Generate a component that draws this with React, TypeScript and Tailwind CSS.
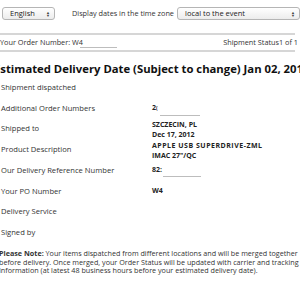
import React from 'react'

// Order status page, scrolled a little to the right so the heading is clipped

const font = { fontFamily: '"Open Sans", "Liberation Sans", sans-serif' }

function FakeSelect({ label, className }: { label: string; className: string }) {
  return (
    <div
      className={`flex h-[13px] shrink-0 items-center justify-between rounded-[3px] border border-[#b5b5b5] bg-gradient-to-b from-white to-[#ececec] pl-[7px] pr-[4px] text-[7.5px] text-[#222] ${className}`}
    >
      <span>{label}</span>
      <span className="flex flex-col text-[4px] leading-[3px] text-[#444]">
        <span>▲</span>
        <span>▼</span>
      </span>
    </div>
  )
}

function Masked({ w, ml, mb }: { w: string; ml: string; mb: string }) {
  return <span className={`h-[1px] self-end bg-[#bdbdbd] ${w} ${ml} ${mb}`} />
}

const rows: { label: string; value?: React.ReactNode }[] = [
  { label: 'Shipment dispatched' },
  {
    label: 'Additional Order Numbers',
    value: (
      <>
        <span>
          2<span className="text-[5px]">(</span>
        </span>
        <Masked w="w-[40px]" ml="ml-[2px]" mb="mb-[3px]" />
      </>
    )
  },
  {
    label: 'Shipped to',
    value: (
      <span className="mt-[2px] flex flex-col leading-[10px]">
        <span>SZCZECIN, PL</span>
        <span>Dec 17, 2012</span>
      </span>
    )
  },
  {
    label: 'Product Description',
    value: (
      <span className="mt-[2px] flex flex-col leading-[10px]">
        <span className="tracking-[0.5px]">APPLE USB SUPERDRIVE-ZML</span>
        <span>IMAC 27"/QC</span>
      </span>
    )
  },
  {
    label: 'Our Delivery Reference Number',
    value: (
      <>
        <span>82:</span>
        <Masked w="w-[38px]" ml="ml-[1px]" mb="mb-[4px]" />
      </>
    )
  },
  { label: 'Your PO Number', value: 'W4' },
  { label: 'Delivery Service' },
  { label: 'Signed by' }
]

export default function App() {
  return (
    <div className="h-[300px] w-[300px] overflow-hidden bg-white text-[#222]" style={font}>
      <div className="flex items-center pl-[2px] pt-[7px]">
        <FakeSelect label="English" className="w-[53px]" />
        <span className="ml-[17px] whitespace-nowrap text-[7.3px] text-[#333]">Display dates in the time zone</span>
        <FakeSelect label="local to the event" className="ml-[3px] w-[123px]" />
      </div>

      <div className="mt-[13px] h-[2px] w-[295px] bg-[#d6d6d6]" />

      <div className="flex h-[15px] items-center justify-between pr-[2px] text-[7.3px] text-[#333]">
        <span className="flex h-full items-center">
          Your Order Number: W4
          <Masked w="w-[37px]" ml="ml-[-3px]" mb="mb-[2px]" />
        </span>
        <span className="whitespace-nowrap">Shipment Status1 of 1</span>
      </div>

      <div className="h-[2px] w-[295px] bg-[#d6d6d6]" />

      <h1 className="-ml-[6px] mt-[9px] whitespace-nowrap text-[11.3px] font-bold leading-[16px] text-[#111]">
        Estimated Delivery Date (Subject to change) Jan 02, 2013
      </h1>

      <div className="flex flex-col pl-[1px]">
        {rows.map((r) => (
          <div key={r.label} className="flex h-[20.8px] items-center">
            <span className="w-[151px] shrink-0 whitespace-nowrap text-[7.6px] text-[#333]">{r.label}</span>
            {r.value && (
              <span className="flex h-full items-center whitespace-nowrap text-[7px] font-bold text-[#222]">
                {r.value}
              </span>
            )}
          </div>
        ))}
      </div>

      <p className="-ml-[1px] mt-[6px] whitespace-nowrap text-[7.2px] leading-[8.5px] text-[#333]">
        <span className="font-bold">Please Note:</span> Your items dispatched from different locations and will be merged
        together
        <br />
        before delivery. Once merged, your Order Status will be updated with carrier and tracking
        <br />
        information (at latest 48 business hours before your estimated delivery date).
      </p>
    </div>
  )
}
